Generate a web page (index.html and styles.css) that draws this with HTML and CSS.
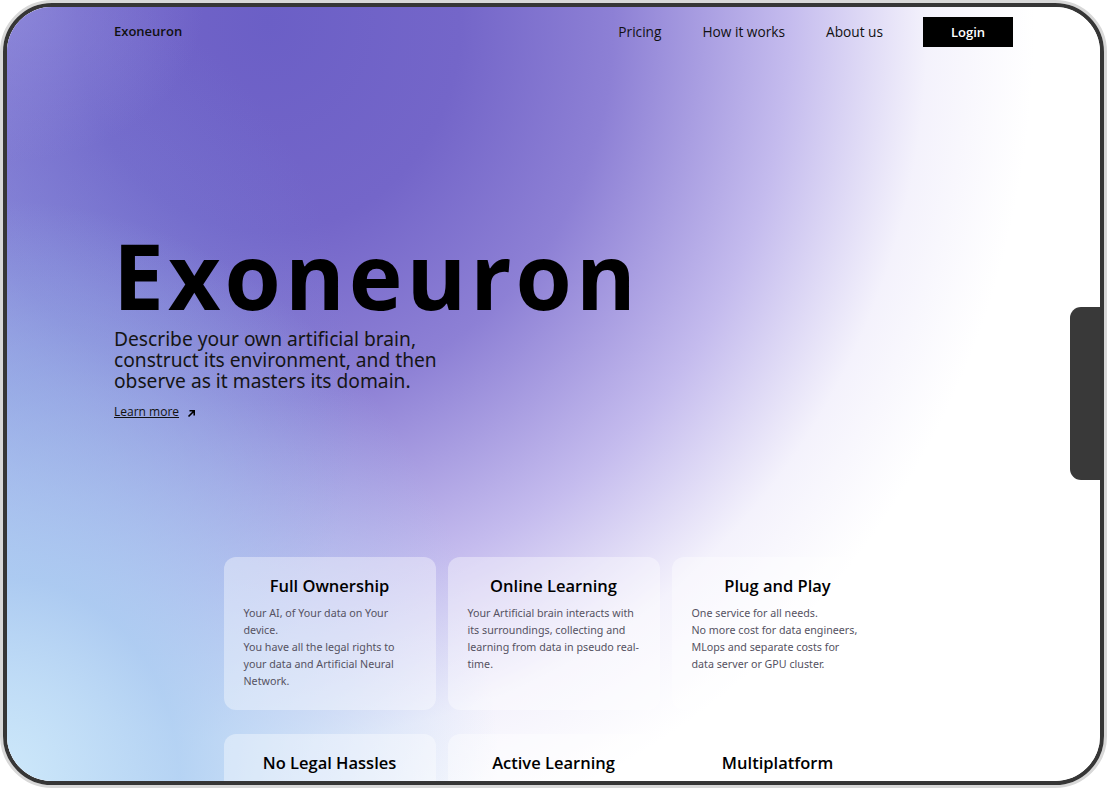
FILE: index.html
```html
<!DOCTYPE html>
<html lang="en">
<head>
<meta charset="utf-8">
<title>Exoneuron</title>
<link rel="stylesheet" href="styles.css">
</head>
<body>
<div class="device">
  <div class="bezel">
    <div class="screen">
      <header class="nav">
        <div class="logo">Exoneuron</div>
        <nav class="links">
          <a href="#">Pricing</a>
          <a href="#">How it works</a>
          <a href="#">About us</a>
          <a href="#" class="login">Login</a>
        </nav>
      </header>
      <section class="hero">
        <h1>Exoneuron</h1>
        <p class="lead">Describe your own artificial brain,<br>construct its environment, and then<br>observe as it masters its domain.</p>
        <a href="#" class="more"><span>Learn more</span>
          <svg width="9" height="9" viewBox="0 0 9 9"><path d="M1.5 7.5 L7 2 M2.5 1.8 H7.2 V6.5" fill="none" stroke="#000" stroke-width="1.6"/></svg>
        </a>
      </section>
      <section class="cards">
        <div class="card">
          <h3>Full Ownership</h3>
          <p>Your AI, of Your data on Your device.<br>You have all the legal rights to your data and Artificial Neural Network.</p>
        </div>
        <div class="card">
          <h3>Online Learning</h3>
          <p>Your Artificial brain interacts with its surroundings, collecting and learning from data in pseudo real-time.</p>
        </div>
        <div class="card">
          <h3>Plug and Play</h3>
          <p>One service for all needs.<br>No more cost for data engineers, MLops and separate costs for data server or GPU cluster.</p>
        </div>
        <div class="card">
          <h3>No Legal Hassles</h3>
        </div>
        <div class="card">
          <h3>Active Learning</h3>
        </div>
        <div class="card">
          <h3>Multiplatform</h3>
        </div>
      </section>
    </div>
  </div>
  <div class="side-button"></div>
</div>
</body>
</html>
```

FILE: styles.css
```css
* { box-sizing: border-box; }
html, body { margin: 0; padding: 0; background: #fff; }
body { width: 1107px; height: 788px; overflow: hidden; font-family: "Open Sans", "Noto Sans", sans-serif; }

.device {
  position: relative;
  width: 1107px;
  height: 788px;
  border: 3px solid #d8d8d8;
  border-radius: 52px;
}
.bezel {
  width: 100%;
  height: 100%;
  border: 4px solid #363636;
  border-radius: 49px;
  overflow: hidden;
}
.screen {
  width: 100%;
  height: 100%;
  overflow: hidden;
  background:
    radial-gradient(ellipse 18% 20% at 0% 0%, rgba(150,150,225,0.55) 0%, rgba(150,150,225,0) 100%),
    radial-gradient(ellipse 45% 75% at 0% 100%, rgba(205,232,250,1) 0%, rgba(170,205,242,0.85) 35%, rgba(150,180,235,0) 100%),
    radial-gradient(ellipse 32% 55% at 0% 50%, rgba(118,140,218,0.55) 0%, rgba(118,140,218,0) 100%),
    radial-gradient(ellipse 70% 108% at 24% 2%, #6b5fc6 0%, #7466c9 25%, #8d80d5 45%, rgba(190,180,236,0.9) 68%, rgba(230,226,248,0.45) 86%, rgba(255,255,255,0) 100%),
    #ffffff;
}
.side-button {
  position: absolute;
  right: 4px;
  top: 304px;
  width: 30px;
  height: 173px;
  background: #393939;
  border-radius: 11px 0 0 11px;
}

.nav {
  display: flex;
  align-items: center;
  justify-content: space-between;
  padding: 10px 87px 0 107px;
  height: 40px;
}
.logo { font-size: 13px; font-weight: 600; color: #111; margin-top: -2px; }
.links { display: flex; align-items: center; gap: 41px; }
.links a { color: #111; text-decoration: none; font-size: 13.7px; font-weight: 500; margin-top: -2px; }
.links a.login {
  background: #000;
  color: #fff;
  width: 90px;
  height: 30px;
  display: flex;
  align-items: center;
  justify-content: center;
  font-size: 13px;
  font-weight: 600;
  margin-top: 0;
  margin-left: -1px;
}

.hero { padding: 190px 0 0 107px; }
.hero h1 {
  margin: 0 0 0 -1px;
  font-size: 91px;
  font-weight: 700;
  line-height: 76px;
  letter-spacing: 4px;
  color: #000;
}
.lead {
  margin: 15px 0 0 0;
  font-family: "Noto Sans", sans-serif;
  font-size: 19.2px;
  line-height: 21px;
  color: #151515;
}
.more {
  display: inline-flex;
  align-items: center;
  gap: 8px;
  margin-top: 12px;
  color: #111;
  font-size: 12px;
  text-decoration: none;
}
.more span { text-decoration: underline; }
.more svg { margin-top: 4px; }

.cards {
  display: grid;
  grid-template-columns: repeat(3, 212px);
  column-gap: 12px;
  row-gap: 24px;
  justify-content: center;
  margin-top: 136px;
}
.card {
  background: rgba(255,255,255,0.38);
  border-radius: 12px;
  height: 153px;
  padding: 17px 20px 0 20px;
}
.card h3 {
  margin: 0 0 7px 0;
  text-align: center;
  font-size: 16.5px;
  font-weight: 600;
  color: #000;
  line-height: 24px;
}
.card p {
  margin: 0;
  font-family: "Noto Sans", sans-serif;
  font-size: 10.7px;
  line-height: 17px;
  color: #555262;
}
```
